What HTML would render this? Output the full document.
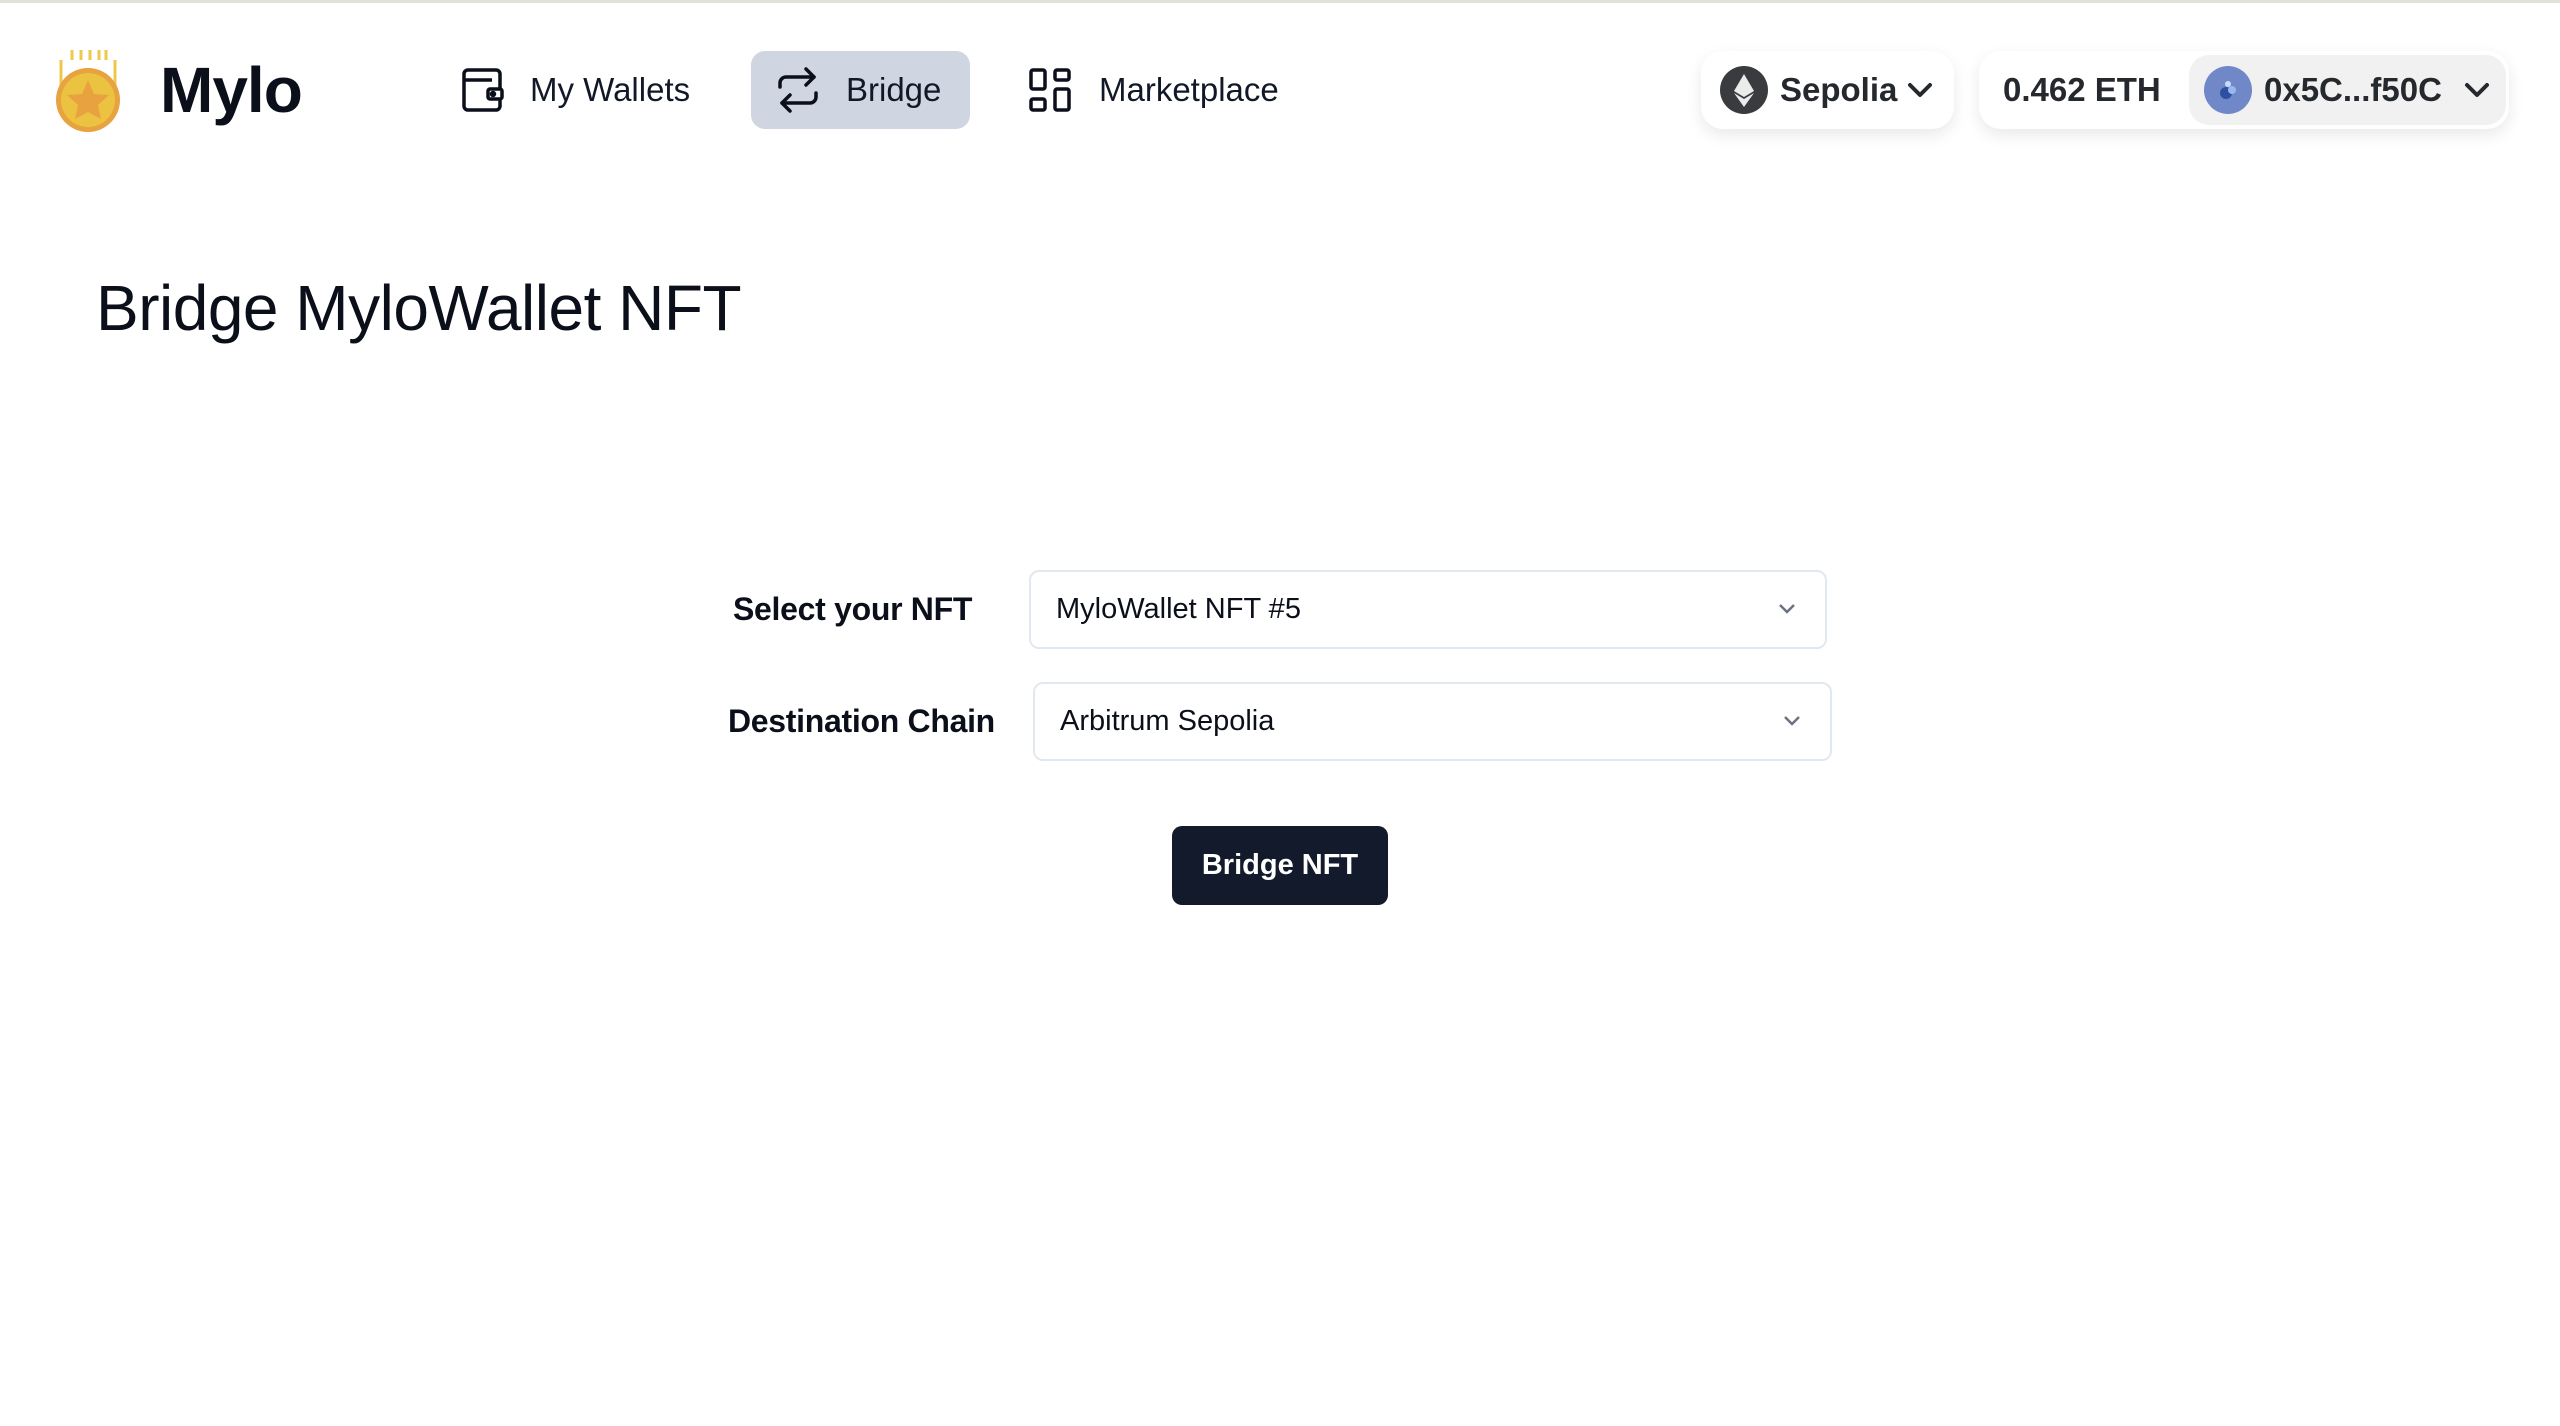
<!DOCTYPE html>
<html><head><meta charset="utf-8"><style>
*{box-sizing:border-box;margin:0;padding:0}
html,body{width:2560px;height:1426px;background:#fff;overflow:hidden;font-family:"Liberation Sans",Arial,sans-serif;color:#0b0f1a}
.topline{position:absolute;left:0;top:0;width:2560px;height:3px;background:#e1e3da}
.abs{position:absolute}
.nav{font-size:33px;color:#111827;display:flex;align-items:center}
.pill{position:absolute;background:#fff;border-radius:22px;box-shadow:0 6px 16px rgba(0,0,0,0.09)}
.label{position:absolute;font-size:32px;font-weight:bold;color:#0b0f1a;letter-spacing:-0.3px}
.sel{position:absolute;border:2px solid #e2e8f0;border-radius:10px;font-size:29px;color:#0b0f1a;padding-left:25px;display:flex;align-items:center}
.sel svg{position:absolute;right:28px;top:50%;margin-top:-8px}
</style></head><body>
<div class="topline"></div>

<svg class="abs" style="left:48px;top:46px" width="80" height="86" viewBox="0 0 80 86">
<g stroke="#ecc94b" stroke-width="3">
<line x1="13" y1="14" x2="13" y2="40"/><line x1="67" y1="14" x2="67" y2="40"/>
<line x1="24" y1="4" x2="24" y2="14"/><line x1="33" y1="4" x2="33" y2="14"/><line x1="42" y1="4" x2="42" y2="14"/><line x1="51" y1="4" x2="51" y2="14"/><line x1="58" y1="4" x2="58" y2="14"/>
</g>
<circle cx="40" cy="54" r="32" fill="#e8a23f"/>
<circle cx="40" cy="54" r="27" fill="#ebc341"/>
<polygon points="40,34 46,48 61,49 50,59 53,73 40,66 27,73 30,59 19,49 34,48" fill="#e8a23f"/>
</svg>
<div class="abs" style="left:160px;top:50px;font-size:64px;font-weight:bold;letter-spacing:-1px;line-height:80px">Mylo</div>

<div class="abs nav" style="left:462px;top:66px;height:48px">
<svg width="42" height="44" viewBox="0 0 42 44" fill="none" stroke="#0b0f1a" stroke-width="3.5"><rect x="2" y="2" width="36" height="40" rx="4"/><path d="M2 12h28"/><rect x="26" y="21" width="14" height="10" rx="2" fill="#fff"/><circle cx="31" cy="26" r="1.5" fill="#0b0f1a"/></svg>
<span style="margin-left:26px">My Wallets</span></div>

<div class="abs" style="left:751px;top:51px;width:219px;height:78px;background:#cfd6e1;border-radius:14px"></div>
<div class="abs nav" style="left:776px;top:66px;height:48px">
<svg width="44" height="46" viewBox="0 0 44 46" fill="none" stroke="#0b0f1a" stroke-width="3.5" stroke-linecap="round" stroke-linejoin="round"><path d="M30 2l8 8-8 8"/><path d="M38 10H10a6 6 0 0 0-6 6v4"/><path d="M14 44l-8-8 8-8"/><path d="M6 36h28a6 6 0 0 0 6-6v-4"/></svg>
<span style="margin-left:26px">Bridge</span></div>

<div class="abs nav" style="left:1029px;top:66px;height:48px">
<svg width="42" height="44" viewBox="0 0 42 44" fill="none" stroke="#0b0f1a" stroke-width="3.5"><rect x="2" y="2" width="14" height="19" rx="2"/><rect x="26" y="2" width="14" height="10" rx="2"/><rect x="2" y="31" width="14" height="11" rx="2"/><rect x="26" y="21" width="14" height="21" rx="2"/></svg>
<span style="margin-left:28px">Marketplace</span></div>

<div class="pill" style="left:1701px;top:51px;width:253px;height:78px"></div>
<svg class="abs" style="left:1720px;top:66px" width="48" height="48" viewBox="0 0 48 48"><circle cx="24" cy="24" r="24" fill="#3a3b3f"/><polygon points="24,8 34,25 24,31 14,25" fill="#fff" opacity=".9"/><polygon points="24,33 34,27 24,41 14,27" fill="#fff" opacity=".9"/></svg>
<div class="abs" style="left:1780px;top:68px;font-size:33px;font-weight:bold;color:#25292e;line-height:44px">Sepolia</div>
<svg class="abs" style="left:1907px;top:82px" width="26" height="16" viewBox="0 0 26 16" fill="none" stroke="#25292e" stroke-width="4" stroke-linecap="round" stroke-linejoin="round"><path d="M3 3l10 10 10-10"/></svg>

<div class="pill" style="left:1979px;top:51px;width:530px;height:78px"></div>
<div class="abs" style="left:2003px;top:68px;font-size:33px;font-weight:bold;color:#25292e;line-height:44px">0.462 ETH</div>
<div class="abs" style="left:2189px;top:55px;width:317px;height:70px;background:#f1f1f2;border-radius:20px"></div>
<svg class="abs" style="left:2204px;top:66px" width="48" height="48" viewBox="0 0 48 48"><circle cx="24" cy="24" r="24" fill="#7088c8"/><circle cx="22" cy="27" r="6" fill="#2f4fa0"/><circle cx="28" cy="24" r="4" fill="#9ab8f0"/><circle cx="24" cy="18" r="3" fill="#c8dcff"/></svg>
<div class="abs" style="left:2264px;top:68px;font-size:33px;font-weight:bold;color:#25292e;line-height:44px">0x5C...f50C</div>
<svg class="abs" style="left:2464px;top:82px" width="26" height="16" viewBox="0 0 26 16" fill="none" stroke="#25292e" stroke-width="4" stroke-linecap="round" stroke-linejoin="round"><path d="M3 3l10 10 10-10"/></svg>

<div class="abs" style="left:96px;top:268px;font-size:64px;line-height:80px;color:#0b0f1a;letter-spacing:-0.5px">Bridge MyloWallet NFT</div>

<div class="label" style="left:733px;top:588px;line-height:42px">Select your NFT</div>
<div class="sel" style="left:1029px;top:570px;width:798px;height:79px">MyloWallet NFT #5<svg width="20" height="14" viewBox="0 0 20 14" fill="none" stroke="#6b7280" stroke-width="2.5"><path d="M3 3l7 7 7-7"/></svg></div>

<div class="label" style="left:728px;top:700px;line-height:42px">Destination Chain</div>
<div class="sel" style="left:1033px;top:682px;width:799px;height:79px">Arbitrum Sepolia<svg width="20" height="14" viewBox="0 0 20 14" fill="none" stroke="#6b7280" stroke-width="2.5"><path d="M3 3l7 7 7-7"/></svg></div>

<div class="abs" style="left:1172px;top:826px;width:216px;height:79px;background:#131a2b;border-radius:10px;color:#fff;font-size:29px;font-weight:bold;display:flex;align-items:center;justify-content:center">Bridge NFT</div>
</body></html>
